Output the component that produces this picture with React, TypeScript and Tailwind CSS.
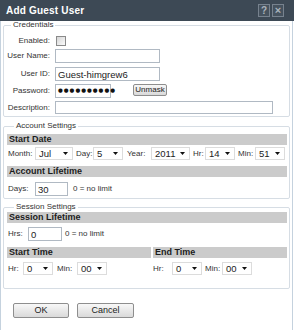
import type { ReactNode } from 'react';

function Arrow() {
  return (
    <svg width="5" height="3" viewBox="0 0 5 3" className="shrink-0">
      <path d="M0 0 L5 0 L2.5 3 Z" fill="#111" />
    </svg>
  );
}

function Select({ value, className }: { value: string; className: string }) {
  return (
    <div className={`flex h-[13px] shrink-0 items-center justify-between border border-[#dcdcdc] bg-white pl-[3px] pr-[4px] text-[9.5px] leading-none text-[#222] ${className}`}>
      <span>{value}</span>
      <Arrow />
    </div>
  );
}

function TextInput({ value, className }: { value?: string; className: string }) {
  return (
    <input
      readOnly
      defaultValue={value}
      className={`shrink-0 border border-[#b0b9c3] bg-white px-[2px] text-[9.5px] leading-none text-[#222] outline-none ${className}`}
    />
  );
}

function Bar({ children, className = '' }: { children: ReactNode; className?: string }) {
  return (
    <div className={`h-[11px] bg-[#cbcbcb] pl-[2px] text-[9px] font-bold leading-[11px] text-[#1c1c1c] ${className}`}>
      {children}
    </div>
  );
}

function Group({ title, className, children }: { title: string; className: string; children: ReactNode }) {
  return (
    <fieldset className={`mx-[2px] rounded-[2px] border border-[#d6dde4] ${className}`}>
      <legend className="ml-[7px] px-[2px] text-[8px] leading-[8px] text-[#333]">{title}</legend>
      {children}
    </fieldset>
  );
}

function FormRow({ label, className, children }: { label: string; className: string; children: ReactNode }) {
  return (
    <div className={`flex items-center ${className}`}>
      <span className="w-[46px] shrink-0 text-right text-[8px] text-[#333]">{label}</span>
      {children}
    </div>
  );
}

export default function App() {
  return (
    <div className="h-[330px] w-[294px] overflow-hidden bg-white font-['Liberation_Sans',Arial,sans-serif]">
      <div className="flex h-[21px] items-center justify-between bg-[#3d4955] pl-[6px] pr-[10px]">
        <span className="text-[10px] font-bold tracking-[0.2px] text-white">Add Guest User</span>
        <div className="flex gap-[2px]">
          <div className="flex h-[13px] w-[12px] items-center justify-center border border-[#77828e] bg-[#46525e] text-[10px] font-bold leading-none text-[#aab3bc]">?</div>
          <div className="flex h-[13px] w-[12px] items-center justify-center border border-[#77828e] bg-[#46525e] text-[11px] font-bold leading-none text-[#aab3bc]">×</div>
        </div>
      </div>

      <div className="h-[309px] w-[293px] border-x border-[#c5d2de]">
        <Group title="Credentials" className="pb-[2px]">
          <FormRow label="Enabled:" className="mt-[7px] h-[10px]">
            <div className="ml-[6px] h-[10px] w-[10px] border border-[#8a8a8a] bg-linear-to-br from-[#d6d6d6] to-[#fbfbfb]" />
          </FormRow>
          <FormRow label="User Name:" className="mt-[3px] h-[14px]">
            <TextInput className="ml-[5px] h-[14px] w-[105px]" />
          </FormRow>
          <FormRow label="User ID:" className="mt-[4px] h-[14px]">
            <TextInput value="Guest-himgrew6" className="ml-[5px] h-[14px] w-[105px]" />
          </FormRow>
          <FormRow label="Password:" className="mt-[3px] h-[14px]">
            <div className="ml-[5px] flex h-[14px] w-[56px] shrink-0 items-center border border-[#b0b9c3] bg-white pl-[2px] font-['DejaVu_Sans',sans-serif] text-[5.5px] leading-none tracking-[1px] text-[#111]">
              ●●●●●●●●●●
            </div>
            <button className="ml-[22px] h-[12px] w-[34px] self-start rounded-[2px] border border-[#8e8e8e] bg-linear-to-b from-[#f7f7f7] to-[#d9d9d9] text-[8px] leading-none text-[#222]">
              Unmask
            </button>
          </FormRow>
          <FormRow label="Description:" className="mt-[3px] h-[13px]">
            <TextInput className="ml-[5px] h-[13px] w-[218px]" />
          </FormRow>
        </Group>

        <Group title="Account Settings" className="mt-[5px] pb-[2px] pl-[3px] pr-[2px]">
          <Bar className="mt-[4px]">Start Date</Bar>
          <div className="mt-[2px] flex h-[13px] items-center pl-[1px] text-[8px] text-[#333]">
            <span className="w-[27px] shrink-0">Month:</span>
            <Select value="Jul" className="w-[38px]" />
            <span className="ml-[3px] w-[17px] shrink-0">Day:</span>
            <Select value="5" className="w-[30px]" />
            <span className="ml-[4px] w-[24px] shrink-0">Year:</span>
            <Select value="2011" className="w-[39px]" />
            <span className="ml-[3px] w-[12px] shrink-0">Hr:</span>
            <Select value="14" className="w-[30px]" />
            <span className="ml-[3px] w-[17px] shrink-0">Min:</span>
            <Select value="51" className="w-[30px]" />
          </div>
          <Bar className="mt-[6px]">Account Lifetime</Bar>
          <div className="mt-[5px] flex h-[14px] items-center pl-[1px] text-[8px] text-[#333]">
            <span className="w-[27px] shrink-0">Days:</span>
            <TextInput value="30" className="h-[14px] w-[33px]" />
            <span className="ml-[5px]">0 = no limit</span>
          </div>
        </Group>

        <Group title="Session Settings" className="mt-[4px] pb-[13px] pl-[3px] pr-[2px]">
          <Bar className="mt-[1px]">Session Lifetime</Bar>
          <div className="mt-[4px] flex h-[14px] items-center pl-[1px] text-[8px] text-[#333]">
            <span className="w-[20px] shrink-0">Hrs:</span>
            <TextInput value="0" className="h-[14px] w-[34px]" />
            <span className="ml-[3px]">0 = no limit</span>
          </div>
          <div className="mt-[6px] grid grid-cols-[144px_134px] gap-x-[2px]">
            <Bar>Start Time</Bar>
            <Bar>End Time</Bar>
          </div>
          <div className="mt-[4px] grid grid-cols-[144px_134px] gap-x-[2px] text-[8px] text-[#333]">
            <div className="flex h-[13px] items-center pl-[1px]">
              <span className="w-[15px] shrink-0">Hr:</span>
              <Select value="0" className="w-[30px]" />
              <span className="ml-[4px] w-[20px] shrink-0">Min:</span>
              <Select value="00" className="w-[30px]" />
            </div>
            <div className="flex h-[13px] items-center">
              <span className="w-[19px] shrink-0">Hr:</span>
              <Select value="0" className="w-[30px]" />
              <span className="ml-[3px] w-[17px] shrink-0">Min:</span>
              <Select value="00" className="w-[30px]" />
            </div>
          </div>
        </Group>

        <div className="mt-[14px] flex pl-[12px]">
          <button className="h-[15px] w-[56px] rounded-[2px] border border-[#8e8e8e] bg-linear-to-b from-[#f8f8f8] to-[#dadada] text-[9px] leading-none text-[#222]">
            OK
          </button>
          <button className="ml-[8px] h-[15px] w-[57px] rounded-[2px] border border-[#8e8e8e] bg-linear-to-b from-[#f8f8f8] to-[#dadada] text-[9px] leading-none text-[#222]">
            Cancel
          </button>
        </div>
      </div>
    </div>
  );
}
